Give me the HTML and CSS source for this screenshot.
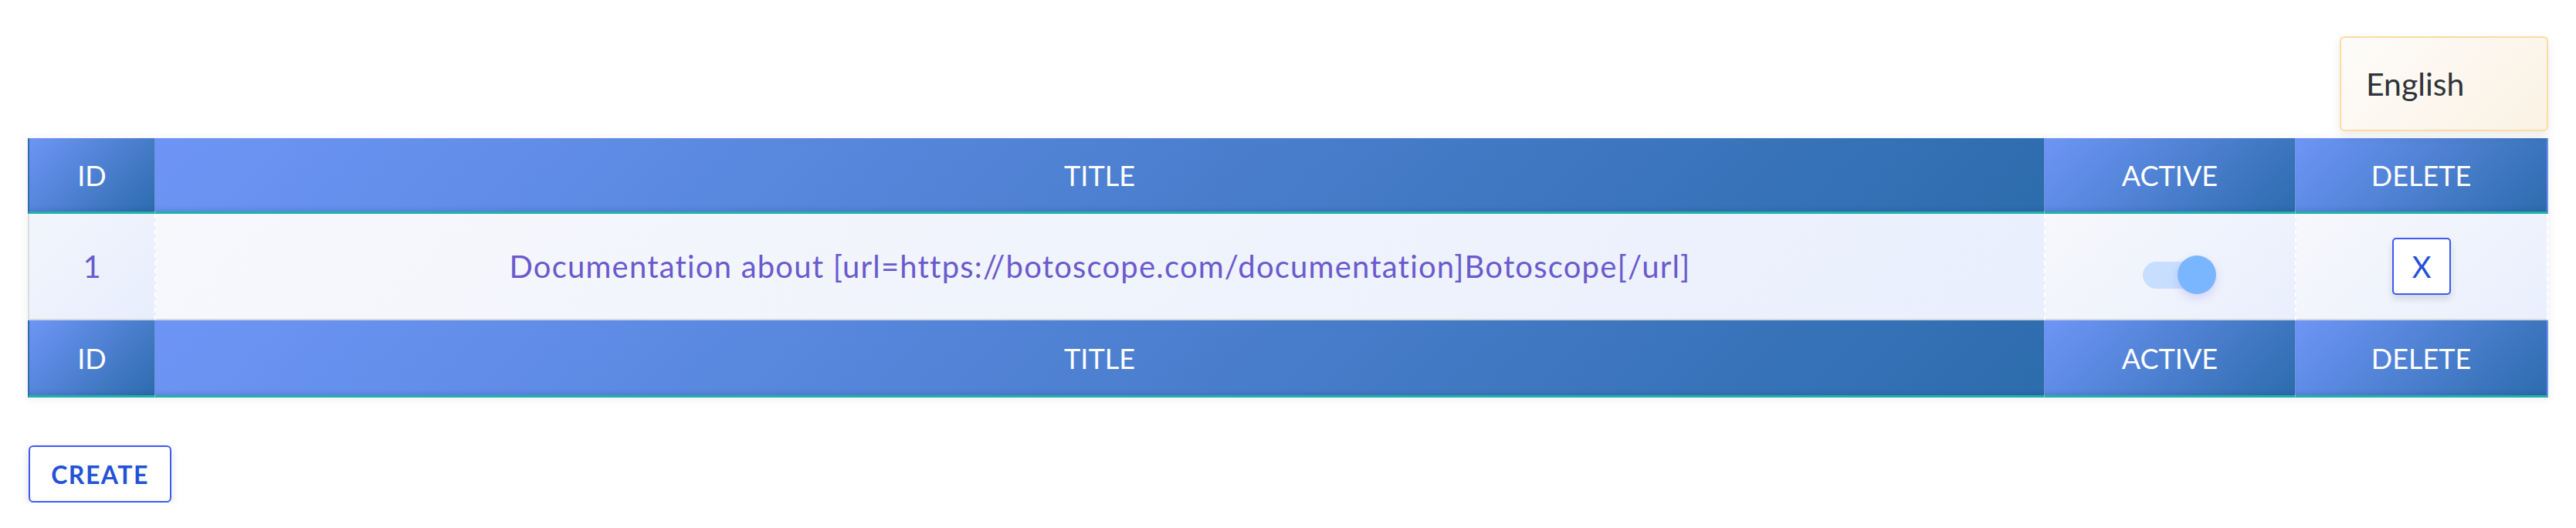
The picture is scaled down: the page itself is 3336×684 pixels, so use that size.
FILE: index.html
```html
<!DOCTYPE html>
<html lang="en">
<head>
<meta charset="utf-8">
<title>Documentation</title>
<link rel="stylesheet" href="styles.css">
</head>
<body>
<div class="topbar">
  <div class="lang-select">English</div>
</div>
<table class="grid">
  <colgroup>
    <col class="c-id"><col class="c-title"><col class="c-active"><col class="c-delete">
  </colgroup>
  <thead>
    <tr><th>ID</th><th>TITLE</th><th>ACTIVE</th><th>DELETE</th></tr>
  </thead>
  <tbody>
    <tr>
      <td class="cell-id">1</td>
      <td class="cell-title">Documentation about [url=https://botoscope.com/documentation]Botoscope[/url]</td>
      <td class="cell-active"><span class="toggle"><span class="track"></span><span class="thumb"></span></span></td>
      <td class="cell-delete"><button class="btn-x">X</button></td>
    </tr>
  </tbody>
  <tfoot>
    <tr><th>ID</th><th>TITLE</th><th>ACTIVE</th><th>DELETE</th></tr>
  </tfoot>
</table>
<div class="actions">
  <button class="btn-create">CREATE</button>
</div>
</body>
</html>
```

FILE: styles.css
```css
html, body {
  margin: 0;
  background: #ffffff;
}
body {
  padding: 47px 36px 0 36px;
  font-family: "Lato", "Open Sans", sans-serif;
  color: #2d3338;
}
.topbar {
  display: flex;
  justify-content: flex-end;
}
.lang-select {
  width: 270px;
  height: 123px;
  box-sizing: border-box;
  display: flex;
  align-items: center;
  padding-left: 32px;
  font-size: 41px;
  color: #2e3439;
  border: 2px solid #fddba3;
  border-radius: 6px;
  background: linear-gradient(135deg, #fdfcf9, #fbf2e4);
  box-shadow: 0 6px 14px rgba(0, 0, 0, 0.08);
}
.grid {
  margin-top: 9px;
  width: 3264px;
  table-layout: fixed;
  border-collapse: separate;
  border-spacing: 0;
  box-shadow: 0 2px 12px rgba(0, 0, 0, 0.07);
}
.c-id { width: 164px; }
.c-title { width: 2447px; }
.c-active { width: 325px; }
.c-delete { width: 328px; }

.grid th {
  height: 96px;
  padding: 0;
  font-weight: 400;
  font-size: 36px;
  color: #ffffff;
  text-transform: uppercase;
  background: linear-gradient(135deg, #6e95f6, #2d6cad);
  border-bottom: 3px solid #20b2aa;
  border-left: 1px solid rgba(170, 190, 255, 0.55);
  box-shadow: inset 0 -6px 6px -4px rgba(20, 50, 110, 0.18);
}
.grid th:first-child {
  border-left: 2px solid #2f6cae;
}
.grid th:last-child {
  border-right: 2px solid #6b8ff0;
}
.grid thead th {
  height: 95px;
}
.grid tfoot th {
  height: 97px;
}

.grid td {
  height: 136px;
  padding: 0;
  text-align: center;
  font-size: 40px;
  color: #6a5acd;
  background: linear-gradient(135deg, #f7f8fc, #e9effd);
  border-bottom: 2px solid #d6d8dc;
  border-left: 2px dashed #ffffff;
}
.grid td.cell-title {
  letter-spacing: 1.2px;
}
.grid td:first-child {
  border-left: 2px solid #dcdde0;
  background: linear-gradient(135deg, #f2f5fc, #e7eefd);
}
.grid td:last-child {
  border-right: 2px dashed #ffffff;
}

.toggle {
  display: inline-flex;
  align-items: center;
  vertical-align: middle;
  margin-top: 22px;
  margin-left: 24px;
}
.track {
  width: 70px;
  height: 35px;
  border-radius: 18px;
  background: #c8defe;
}
.thumb {
  width: 50px;
  height: 50px;
  border-radius: 50%;
  margin-left: -25px;
  background: #7ab6fd;
  box-shadow: 0 5px 12px rgba(120, 100, 230, 0.22);
}

.btn-x {
  width: 76px;
  height: 74px;
  padding: 0;
  background: #ffffff;
  border: 2px solid #3d5af1;
  border-radius: 5px;
  color: #2650d6;
  font-family: "Lato", sans-serif;
  font-size: 38px;
  box-shadow: 0 5px 10px rgba(0, 0, 0, 0.12);
  vertical-align: middle;
}

.actions {
  margin-top: 62px;
  padding-left: 1px;
}
.btn-create {
  width: 185px;
  height: 74px;
  padding: 0;
  background: #ffffff;
  border: 2px solid #3d5af1;
  border-radius: 6px;
  color: #2352d6;
  font-family: "Lato", sans-serif;
  font-weight: 700;
  font-size: 32px;
  letter-spacing: 1.5px;
  box-shadow: 0 5px 12px rgba(0, 0, 0, 0.12);
}
```
